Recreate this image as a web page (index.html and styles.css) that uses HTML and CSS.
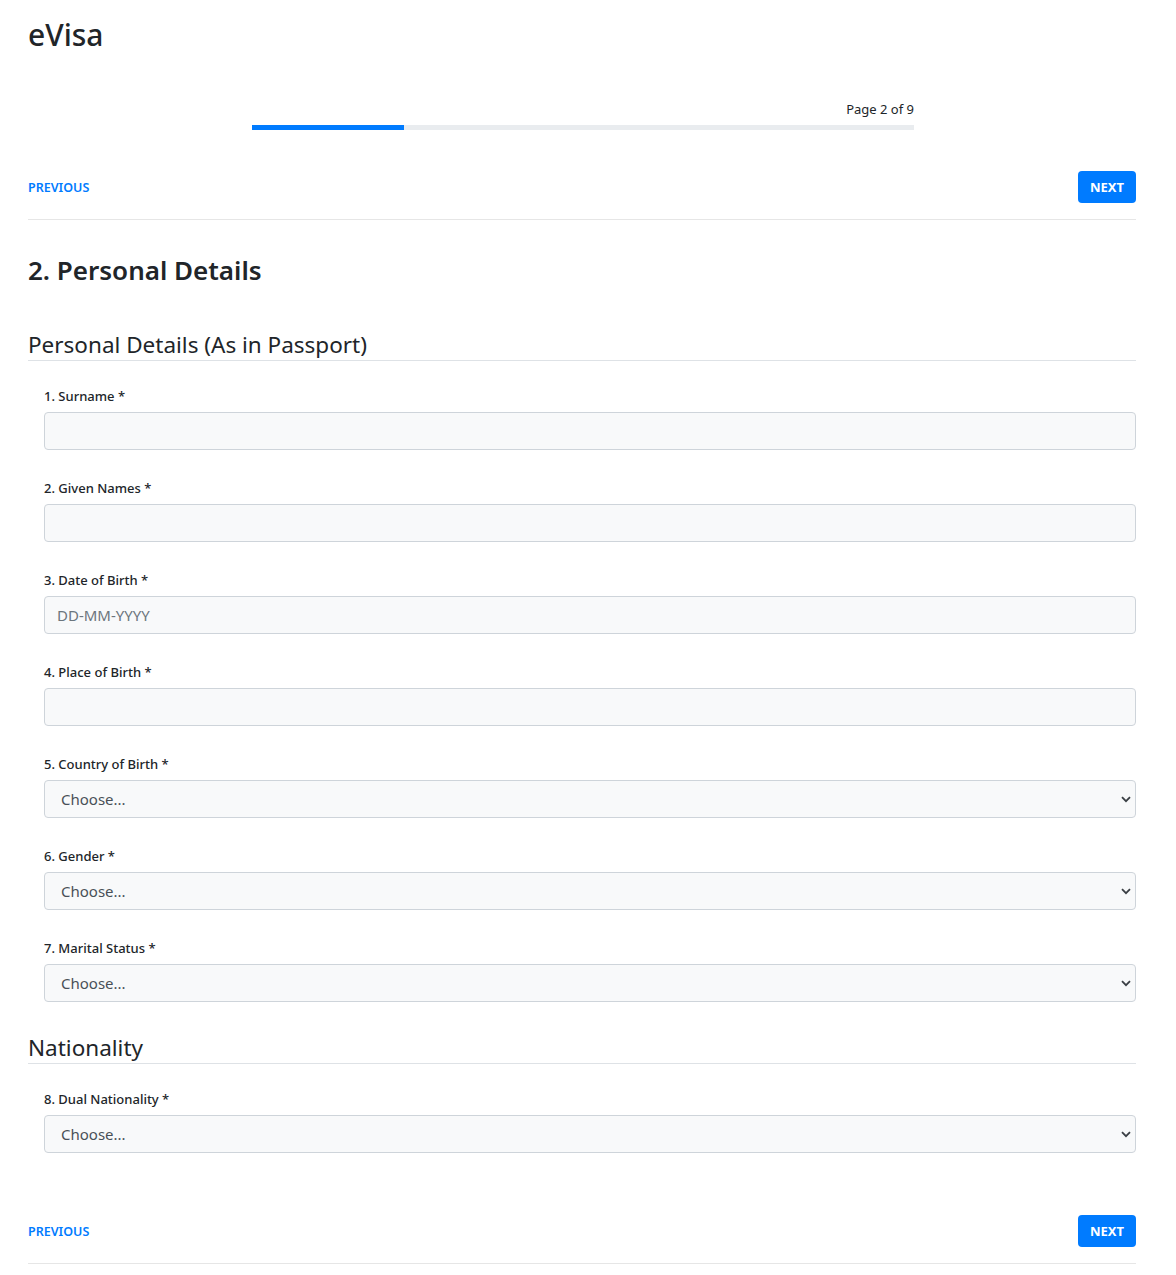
FILE: index.html
```html
<!DOCTYPE html>
<html lang="en">
<head>
<meta charset="utf-8">
<title>eVisa</title>
<link rel="stylesheet" href="styles.css">
</head>
<body>
<div class="page">
  <header class="brand">eVisa</header>

  <div class="progress-wrap">
    <div class="progress-label">Page 2 of 9</div>
    <div class="progress"><div class="progress-bar" style="width:23%"></div></div>
  </div>

  <nav class="pager">
    <a class="prev" href="#">PREVIOUS</a>
    <button class="next" type="button">NEXT</button>
  </nav>

  <h3 class="section-title">2. Personal Details</h3>

  <section class="group">
    <h4 class="group-title">Personal Details (As in Passport)</h4>
    <div class="fields">
      <div class="field">
        <label class="label">1. Surname *</label>
        <input class="control" type="text">
      </div>
      <div class="field">
        <label class="label">2. Given Names *</label>
        <input class="control" type="text">
      </div>
      <div class="field">
        <label class="label">3. Date of Birth *</label>
        <input class="control" type="text" placeholder="DD-MM-YYYY">
      </div>
      <div class="field">
        <label class="label">4. Place of Birth *</label>
        <input class="control" type="text">
      </div>
      <div class="field">
        <label class="label">5. Country of Birth *</label>
        <div class="select-wrap">
          <select class="control select"><option>Choose...</option></select>
          <svg class="chev" width="10" height="7" viewBox="0 0 10 7"><path d="M1 1.2 L5 5.2 L9 1.2" fill="none" stroke="#3a3f44" stroke-width="1.8"/></svg>
        </div>
      </div>
      <div class="field">
        <label class="label">6. Gender *</label>
        <div class="select-wrap">
          <select class="control select"><option>Choose...</option></select>
          <svg class="chev" width="10" height="7" viewBox="0 0 10 7"><path d="M1 1.2 L5 5.2 L9 1.2" fill="none" stroke="#3a3f44" stroke-width="1.8"/></svg>
        </div>
      </div>
      <div class="field">
        <label class="label">7. Marital Status *</label>
        <div class="select-wrap">
          <select class="control select"><option>Choose...</option></select>
          <svg class="chev" width="10" height="7" viewBox="0 0 10 7"><path d="M1 1.2 L5 5.2 L9 1.2" fill="none" stroke="#3a3f44" stroke-width="1.8"/></svg>
        </div>
      </div>
    </div>
  </section>

  <section class="group">
    <h4 class="group-title">Nationality</h4>
    <div class="fields">
      <div class="field">
        <label class="label">8. Dual Nationality *</label>
        <div class="select-wrap">
          <select class="control select"><option>Choose...</option></select>
          <svg class="chev" width="10" height="7" viewBox="0 0 10 7"><path d="M1 1.2 L5 5.2 L9 1.2" fill="none" stroke="#3a3f44" stroke-width="1.8"/></svg>
        </div>
      </div>
    </div>
  </section>

  <nav class="pager pager-bottom">
    <a class="prev" href="#">PREVIOUS</a>
    <button class="next" type="button">NEXT</button>
  </nav>
</div>
</body>
</html>
```

FILE: styles.css
```css
* { box-sizing: border-box; }

html, body {
  margin: 0;
  padding: 0;
  background: #ffffff;
}

body {
  font-family: "Noto Sans", "Open Sans", sans-serif;
  color: #212529;
  font-size: 16px;
  line-height: 1.5;
}

.page {
  width: 1108px;
  margin-left: 28px;
  padding-top: 17px;
  padding-bottom: 20px;
}

.brand {
  font-size: 30px;
  font-weight: 500;
  line-height: 36px;
  color: #212529;
}

.progress-wrap {
  width: 662px;
  margin: 46px 0 0 224px;
}

.progress-label {
  text-align: right;
  font-size: 13px;
  line-height: 20px;
  margin-bottom: 6px;
}

.progress {
  height: 5px;
  background: #e9ecef;
  display: flex;
}

.progress-bar {
  background: #007bff;
  height: 100%;
}

.pager {
  display: flex;
  align-items: center;
  justify-content: space-between;
  margin-top: 41px;
  padding-bottom: 16px;
  border-bottom: 1px solid #e6e6e6;
}

.pager-bottom {
  margin-top: 62px;
}

.prev {
  color: #007bff;
  text-decoration: none;
  font-size: 12.5px;
  font-weight: 600;
  line-height: 20px;
  padding-top: 1px;
}

.next {
  height: 32px;
  padding: 0 12px;
  border: none;
  border-radius: 4px;
  background: #007bff;
  color: #ffffff;
  font-family: inherit;
  font-size: 13px;
  font-weight: 700;
  cursor: pointer;
}

.section-title {
  margin: 35px 0 0;
  font-size: 26px;
  font-weight: 600;
  line-height: 1.2;
}

.group-title {
  margin: 45px 0 0;
  padding-bottom: 2px;
  font-size: 22.5px;
  font-weight: 400;
  line-height: 1.2;
  border-bottom: 1px solid #dee2e6;
}

.group + .group .group-title {
  margin-top: 32px;
}

.fields {
  padding-left: 16px;
  padding-top: 25px;
}

.field {
  display: flex;
  flex-direction: column;
  margin-bottom: 28px;
}

.label {
  font-size: 13px;
  font-weight: 500;
  line-height: 21px;
  margin-bottom: 5px;
}

.control {
  width: 100%;
  height: 38px;
  padding: 6px 12px;
  border: 1px solid #ced4da;
  border-radius: 4px;
  background: #f8f9fa;
  font-family: inherit;
  font-size: 15px;
  color: #495057;
  outline: none;
}

.control::placeholder {
  color: #6c757d;
}

.select-wrap {
  position: relative;
}

.select {
  appearance: none;
  -webkit-appearance: none;
  padding-left: 16px;
}

.chev {
  position: absolute;
  right: 5px;
  top: 16px;
  pointer-events: none;
}
```
